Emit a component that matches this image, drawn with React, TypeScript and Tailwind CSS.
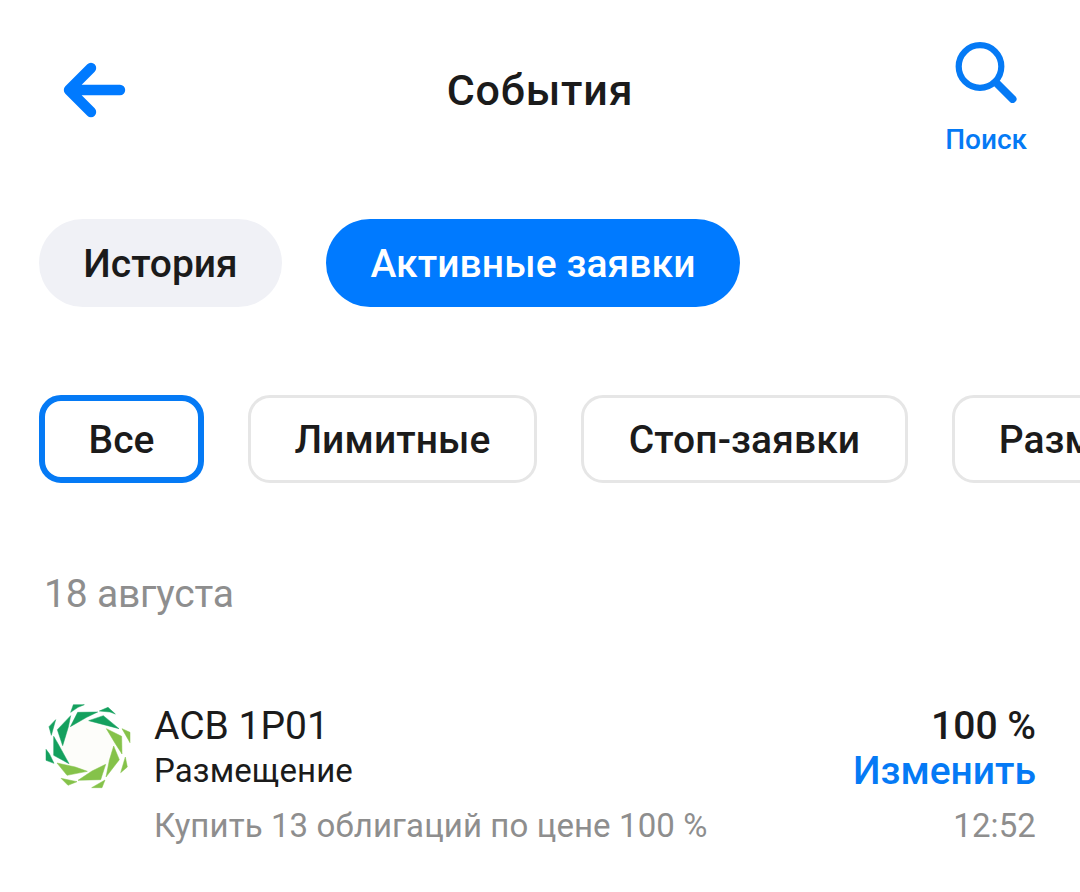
import clsx from "clsx";
import { useState } from "react";

const TABS = [
	{ id: "history", label: "История", width: "w-[243px]" },
	{ id: "active", label: "Активные заявки", width: "w-[414px]" },
];

const FILTERS = [
	{ id: "all", label: "Все", width: "w-[165px]" },
	{ id: "limit", label: "Лимитные", width: "w-[289px]" },
	{ id: "stop", label: "Стоп-заявки", width: "w-[327px]" },
	{ id: "placement", label: "Размещения", width: "w-[331px]" },
];

export default function App() {
	const [tab, setTab] = useState("active");
	const [filter, setFilter] = useState("all");

	return (
		<div className="h-[892px] w-full overflow-hidden bg-white font-[Roboto,sans-serif] text-[#1b1b1b]">
			<header className="grid h-[180px] grid-cols-[1fr_auto_1fr] items-center pr-[53px] pl-[62px]">
				<button type="button" aria-label="Назад" className="justify-self-start">
					<BackIcon />
				</button>
				<h1 className="mr-[9px] text-[43px] leading-[50px] font-medium tracking-[0.8px]">События</h1>
				<button type="button" className="flex flex-col items-center justify-self-end pt-[17px] text-[#057af5]">
					<SearchIcon />
					<span className="mt-[21px] text-[28px] leading-8 font-medium">Поиск</span>
				</button>
			</header>

			<nav className="mt-[39px] flex gap-11 pl-[39px]">
				{TABS.map(t => (
					<button
						key={t.id}
						type="button"
						onClick={() => setTab(t.id)}
						className={clsx(
							"h-[88px] shrink-0 rounded-full pt-[2px] text-[39px] font-medium whitespace-nowrap",
							t.width,
							tab === t.id ? "bg-[#007aff] tracking-[0.1px] text-white" : "bg-[#f0f1f6]",
						)}
					>
						{t.label}
					</button>
				))}
			</nav>

			<div className="mt-[88px] flex gap-11 overflow-hidden pl-[39px]">
				{FILTERS.map(f => (
					<button
						key={f.id}
						type="button"
						onClick={() => setFilter(f.id)}
						className={clsx(
							"h-[88px] shrink-0 rounded-[22px] pt-[2px] text-[39px] font-medium tracking-[0.1px] whitespace-nowrap",
							f.width,
							filter === f.id ? "border-[6px] border-[#057af5]" : "border-[3px] border-[#e6e6e6]",
						)}
					>
						{f.label}
					</button>
				))}
			</div>

			<section className="mt-[87px] pr-11 pl-11">
				<h2 className="text-[39px] leading-[48px] tracking-[-0.2px] text-[#8e8e8e]">18 августа</h2>
				<OrderRow />
			</section>
		</div>
	);
}

function OrderRow() {
	return (
		<article className="mt-[84px] flex items-start">
			<IssuerLogo />
			<div className="mt-px ml-[22px] flex-1">
				<div className="flex justify-between text-[39px] leading-[46px]">
					<span>АСВ 1Р01</span>
					<span className="font-medium">100 %</span>
				</div>
				<div className="flex items-center justify-between leading-[44px]">
					<span className="text-[33px] tracking-[0.1px]">Размещение</span>
					<button type="button" className="text-[39px] font-medium text-[#057af5]">
						Изменить
					</button>
				</div>
				<div className="mt-[13px] flex justify-between text-[33px] leading-10 tracking-[0.1px] text-[#8e8e8e]">
					<span>Купить 13 облигаций по цене 100 %</span>
					<span>12:52</span>
				</div>
			</div>
		</article>
	);
}

function BackIcon() {
	return (
		<svg width="64" height="56" viewBox="0 0 64 56" fill="none" stroke="#007aff" strokeWidth="10.4" strokeLinecap="round">
			<path d="M58 28H9" />
			<path d="M29 6 7 28 29 50" strokeLinejoin="round" />
			<path d="m17 23-5 5 5 5z" strokeWidth="5" fill="#007aff" />
		</svg>
	);
}

function SearchIcon() {
	return (
		<svg width="62" height="62" viewBox="0 0 62 62" fill="none" stroke="#057af5" strokeLinecap="round">
			<circle cx="25" cy="25.5" r="21.3" strokeWidth="6.2" />
			<path d="M41 41.5 57.5 58" strokeWidth="8" />
		</svg>
	);
}

// Ring of shards: the upper half is dark green, the lower half is light green
function IssuerLogo() {
	return (
		<svg width="88" height="88" viewBox="42 37 264 264" className="shrink-0">
			<circle cx="174" cy="170" r="82" fill="#fdfdfa" />
			<g fill="#14a05e" stroke="#14a05e" strokeWidth="1.5">
				<path d="M130 45h33l-19 8-22 15z" />
				<path d="m208 64 26-11 22 20-16-6z" />
				<path d="M143 68l60-1-33 16-49 28z" />
				<path d="m176 93 44-15 47 39z" />
				<path d="M122 78 115 112 98 168 82 120z" />
				<path d="M77 90 64 137 57 111z" />
				<path d="m71 140 13 22 33 60-46-25z" />
				<path d="m48 179 10 13 14 29-24-9z" />
			</g>
			<g fill="#85c24a" stroke="#85c24a" strokeWidth="1.5">
				<path d="m229 117 46 23 1 53-20-31z" />
				<path d="m276 117 24 11v31z" />
				<path d="m251 169 17 41-40 52 10-50z" />
				<path d="m286 202 6 30-20 17z" />
				<path d="m81 220 55 12 36 13-61 12z" />
				<path d="m227 224-15 46-68 2 42-28z" />
				<path d="m93 266 48 10-27 11z" />
				<path d="m225 271-9 23h-31z" />
			</g>
		</svg>
	);
}
